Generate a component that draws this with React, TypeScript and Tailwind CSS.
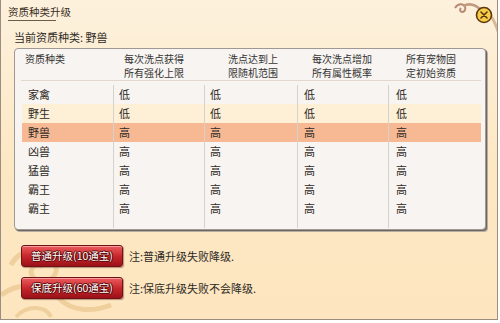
import React from "react";

const rows: { name: string; v: string; bg: string }[] = [
  { name: "家禽", v: "低", bg: "" },
  { name: "野生", v: "低", bg: "bg-[#fdf0d6]" },
  { name: "野兽", v: "高", bg: "bg-[#f6b994]" },
  { name: "凶兽", v: "高", bg: "" },
  { name: "猛兽", v: "高", bg: "" },
  { name: "霸王", v: "高", bg: "" },
  { name: "霸主", v: "高", bg: "" },
];

const cols = "grid grid-cols-[92px_91px_93px_91px_92px]";

function RedButton({ label }: { label: string }) {
  return (
    <div className="w-[102px] h-[22px] rounded-[3px] border border-[#6e1414] bg-gradient-to-b from-[#ec5a5e] via-[#c8262c] to-[#9c1018] shadow-[inset_0_1px_0_rgba(255,200,200,0.6),1px_1px_1px_rgba(80,20,20,0.4)] flex items-center justify-center">
      <span className="text-[10.5px] leading-[12px] text-white [text-shadow:0_0_1px_#5a0a0a,1px_0_0_#5a0a0a,-1px_0_0_#5a0a0a,0_1px_0_#5a0a0a,0_-1px_0_#5a0a0a]">
        {label}
      </span>
    </div>
  );
}

export default function App() {
  return (
    <div className="w-[500px] h-[323px] bg-white font-['Noto_Sans_CJK_SC',sans-serif] text-[#2e2a26]">
      <div className="relative w-[498px] h-[320px] border-l border-r border-b border-[#9b8e80] bg-gradient-to-b from-[#fdf1dd] via-[#fde8c4] to-[#fde6bf] overflow-hidden">
        {/* decorative swirl bottom-left */}
        <svg className="absolute left-0 top-[225px]" width="140" height="95" viewBox="0 0 140 95" fill="none">
          <path d="M10 40 C 20 20, 50 20, 55 40 C 58 55, 40 62, 32 52 C 26 44, 36 36, 42 42" stroke="#efcf9c" strokeWidth="5" />
          <path d="M0 70 C 20 55, 45 60, 60 75 C 70 85, 90 88, 110 80" stroke="#efcf9c" strokeWidth="5" />
          <path d="M15 92 C 25 80, 45 80, 50 92" stroke="#efcf9c" strokeWidth="4" />
        </svg>

        {/* top-right decoration + close */}
        <svg className="absolute left-[450px] top-0" width="48" height="36" viewBox="0 0 48 36" fill="none">
          <path d="M4 8 C 8 2, 16 4, 14 10 C 12 14, 7 11, 10 8" stroke="#b88a74" strokeWidth="2" />
          <path d="M12 6 C 20 2, 26 6, 30 10" stroke="#c29a80" strokeWidth="2.5" />
          <path d="M40 16 C 44 22, 46 28, 48 34" stroke="#d9b896" strokeWidth="3" />
          <circle cx="33" cy="15" r="7.5" fill="#f6cf48" stroke="#5e3410" strokeWidth="1.6" />
          <path d="M30 12 L36 18 M36 12 L30 18" stroke="#5e3410" strokeWidth="1.6" strokeLinecap="round" />
        </svg>

        <div className="relative flex flex-col">
          {/* title */}
          <div className="pl-[7px] pt-[6px]">
            <div className="text-[10.5px] leading-[12px] text-[#3a2e24]">资质种类升级</div>
            <div className="w-[48px] h-px bg-[#6d5c4c] mt-[2px]" />
          </div>

          <div className="pl-[13px] mt-[10px] text-[11px] leading-[12px]">当前资质种类: 野兽</div>

          {/* table panel */}
          <div className="ml-[13px] mt-[5px] w-[472px] h-[182px] rounded-[4px] border border-[#9f9893] bg-[#f7f4f1] shadow-[1px_1px_0_#6f6862,2px_2px_0_#b5aca3] pl-[7px] pr-[4px] pt-[3px] flex flex-col">
            <div className={`${cols} text-[10px] leading-[14px] text-[#333]`}>
              <div className="pl-[3px]">资质种类</div>
              <div className="pl-[10px]">每次洗点获得<br />所有强化上限</div>
              <div className="pl-[23px]">洗点达到上<br />限随机范围</div>
              <div className="pl-[14px]">每次洗点增加<br />所有属性概率</div>
              <div className="pl-[17px]">所有宠物固<br />定初始资质</div>
            </div>
            <div className="h-px bg-[#e2d8cc] -ml-px" />
            <div className="mt-[4px] flex flex-col">
              {rows.map((r) => (
                <div key={r.name} className={`${cols} h-[19px] text-[11px] leading-[19px] ${r.bg}`}>
                  <div className="pl-[6px] border-r border-[#d6d1cc]">{r.name}</div>
                  <div className="pl-[5px] border-r border-[#d6d1cc]">{r.v}</div>
                  <div className="pl-[5px] border-r border-[#d6d1cc]">{r.v}</div>
                  <div className="pl-[6px] border-r border-[#d6d1cc]">{r.v}</div>
                  <div className="pl-[7px]">{r.v}</div>
                </div>
              ))}
              <div className={`${cols} h-[10px]`}>
                <div className="border-r border-[#d6d1cc]" />
                <div className="border-r border-[#d6d1cc]" />
                <div className="border-r border-[#d6d1cc]" />
                <div className="border-r border-[#d6d1cc]" />
                <div />
              </div>
            </div>
          </div>

          {/* buttons */}
          <div className="ml-[20px] mt-[15px] flex flex-col gap-[10px]">
            <div className="flex items-center gap-[6px]">
              <RedButton label="普通升级(10通宝)" />
              <span className="text-[11px] leading-[12px]">注:普通升级失败降级.</span>
            </div>
            <div className="flex items-center gap-[6px]">
              <RedButton label="保底升级(60通宝)" />
              <span className="text-[11px] leading-[12px]">注:保底升级失败不会降级.</span>
            </div>
          </div>
        </div>
      </div>
    </div>
  );
}
